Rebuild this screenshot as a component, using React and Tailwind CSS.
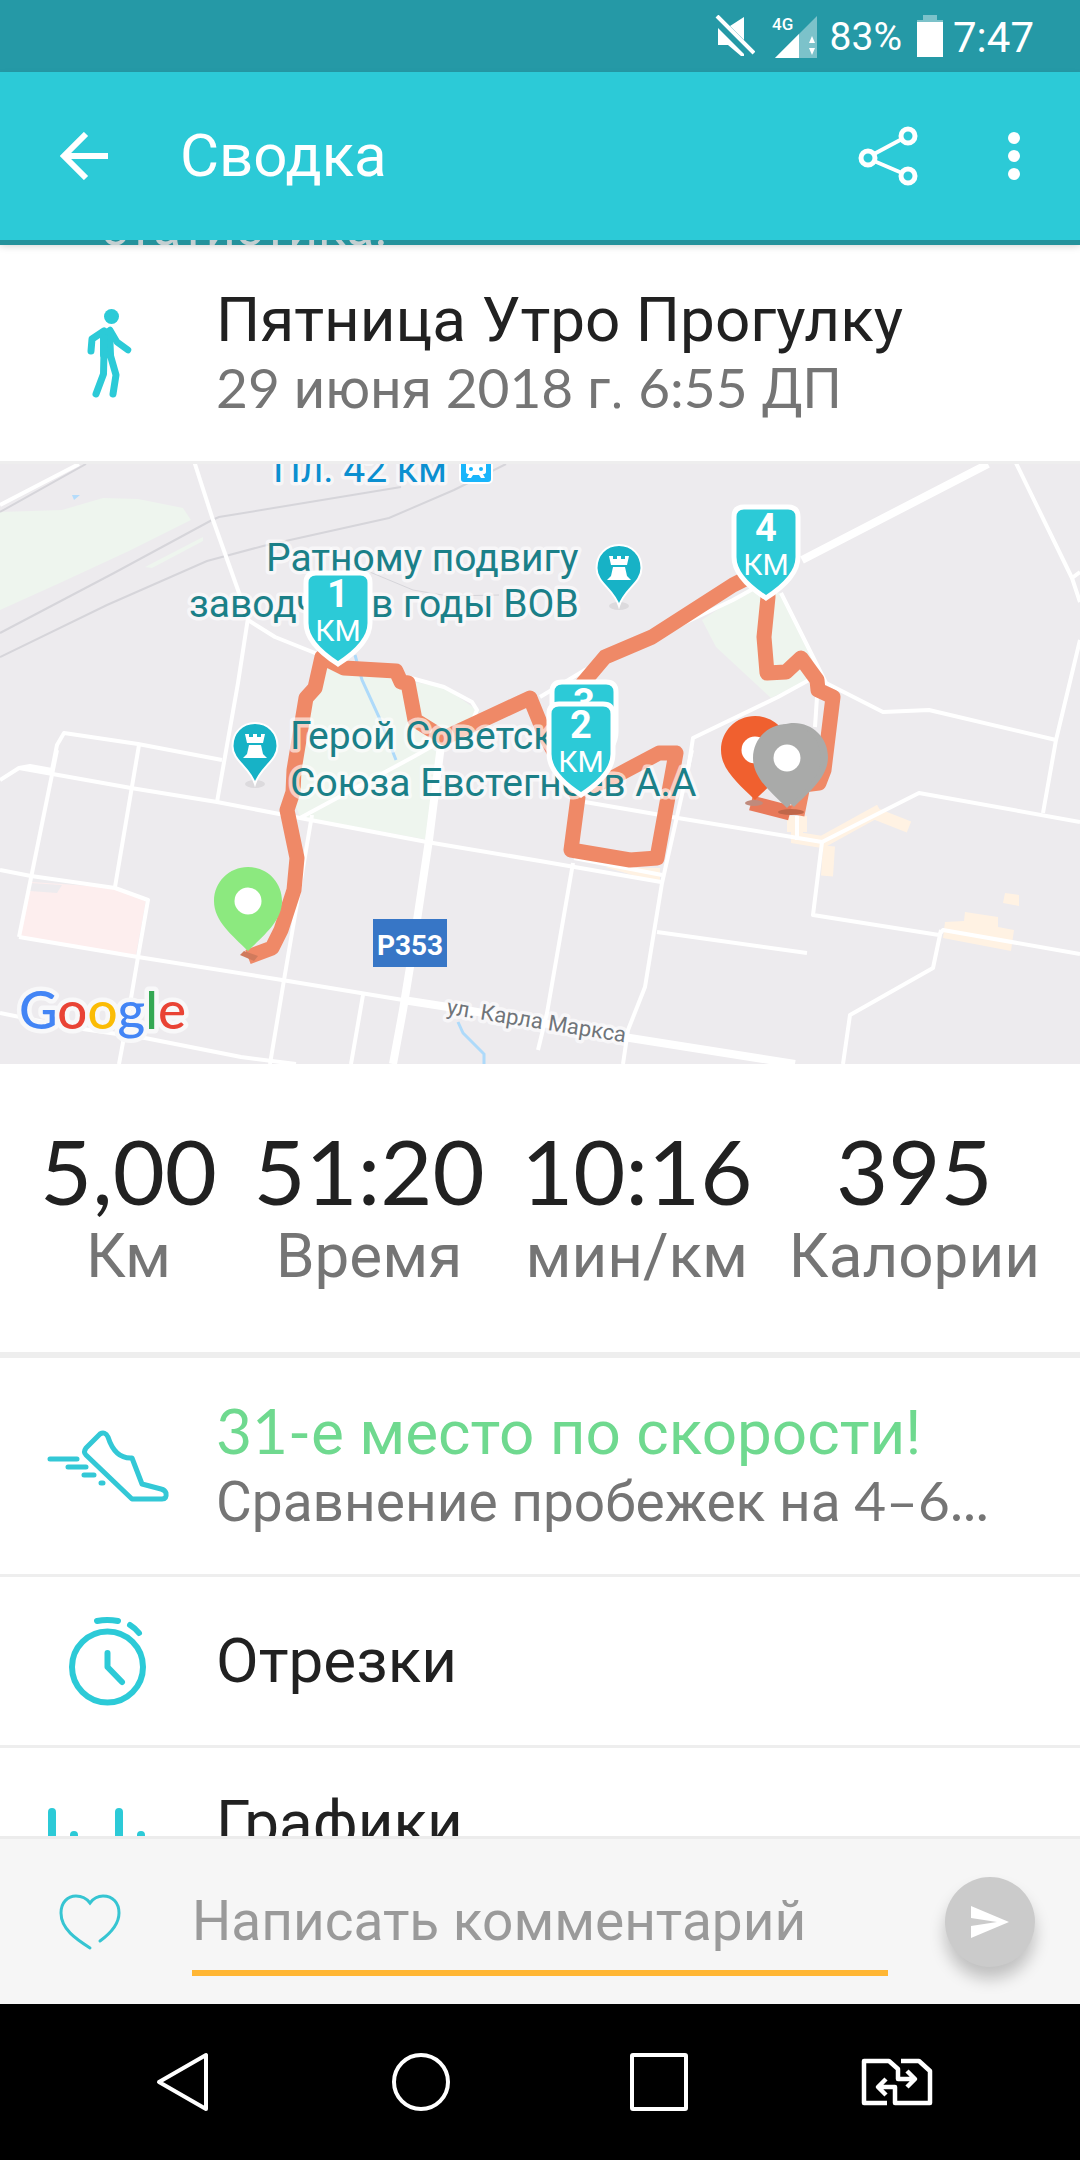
import React from "react";

const Num = ({ children }) => (
  <span className="font-['Lato',sans-serif] leading-none">{children}</span>
);

function StatusBar() {
  return (
    <div className="flex h-[72px] shrink-0 items-center justify-end bg-[#2599a6] pr-[46px] text-white">
      <svg className="mr-[16px] h-[42px] w-[40px]" viewBox="0 0 40 42" fill="#fff">
        <path d="M15 11 29 2V25Z" />
        <path d="M3 13 29 39V41H26L13 30H3Z" />
        <path d="M2 1 39 38" stroke="#fff" strokeWidth="4" />
      </svg>
      <svg className="mr-[13px] h-[48px] w-[46px]" viewBox="0 0 46 48">
        <path d="M4 46 46 4V46Z" fill="#7cc2ca" />
        <path d="M4 46 28 22V46Z" fill="#fff" />
        <path d="M38 31 41 24 44 31ZM38 36 41 43 44 36Z" fill="#fff" />
        <text x="1" y="18" fontSize="17" fill="#fff" fontFamily="Roboto, sans-serif" fontWeight="500">4G</text>
      </svg>
      <span className="pt-[3px] text-[39px]">83%</span>
      <svg className="mr-[10px] ml-[15px] h-[42px] w-[26px]" viewBox="0 0 26 42">
        <path d="M6 0H20V5H26V8H0V5H6Z" fill="#7cc2ca" />
        <path d="M0 7H26V42H0Z" fill="#fff" />
      </svg>
      <span className="pt-[3px] text-[42px]">7:47</span>
    </div>
  );
}

function AppBar() {
  return (
    <header className="relative z-10 shrink-0 shadow-[0_5px_8px_rgba(0,0,0,0.22)]">
      <div className="flex h-[168px] items-center bg-[#2ccad7] text-white">
        <button aria-label="Назад" className="ml-[60px] h-[48px] w-[48px]">
          <svg viewBox="0 0 48 48" fill="none" stroke="#fff" strokeWidth="6">
            <path d="M26 2 4 24 26 46M4 24H48" />
          </svg>
        </button>
        <h1 className="ml-[72px] flex-1 text-[60px]">Сводка</h1>
        <button aria-label="Поделиться" className="mr-[88px] h-[62px] w-[62px]">
          <svg viewBox="0 0 62 62" fill="none" stroke="#fff" strokeWidth="5">
            <circle cx="51" cy="11" r="7" />
            <circle cx="11" cy="33" r="7" />
            <circle cx="51" cy="51" r="7" />
            <path d="M17 29 45 14M17 36 45 48" strokeWidth="4" />
          </svg>
        </button>
        <button aria-label="Ещё" className="mr-[59px] h-[52px] w-[14px]">
          <svg viewBox="0 0 14 52" fill="#fff">
            <circle cx="7" cy="8" r="6" />
            <circle cx="7" cy="26" r="6" />
            <circle cx="7" cy="44" r="6" />
          </svg>
        </button>
      </div>
    </header>
  );
}

const Walker = () => (
  <svg className="h-[100px] w-[60px]" viewBox="78 303 60 100" fill="none" stroke="#2ccad7" strokeWidth="8" strokeLinecap="round" strokeLinejoin="round">
    <circle cx="111.500" cy="316.500" r="7.500" fill="#2ccad7" stroke="none" />
    <path d="M104 331 92 339 91 351M104 352 103.500 374 96 394M110 354 116 375 113 394" strokeWidth="7" />
    <path d="M110 330 117 342 128 350" strokeWidth="6.500" />
    <path d="M103 332 110 331 111 355 103 355Z" fill="#2ccad7" strokeWidth="6" />
  </svg>
);

const Shoe = () => (
  <svg className="h-[80px] w-[124px]" viewBox="46 1426 124 80" fill="none" stroke="#33c8d6" strokeWidth="5" strokeLinecap="round" strokeLinejoin="round">
    <path d="M100 1434 86 1448Q83 1452 86 1455L132 1499H162Q167 1499 166 1493Q165 1490 161 1489L142 1484 132 1458Q115 1459 108 1437Q105 1431 100 1434Z" />
    <path d="M50 1459H77M68 1467H86M84 1475H94M101 1483H103" />
  </svg>
);

const Stopwatch = () => (
  <svg className="h-[96px] w-[84px]" viewBox="66 1613 84 96" fill="none" stroke="#2ccad7" strokeWidth="6" strokeLinecap="round" strokeLinejoin="round">
    <circle cx="107.500" cy="1667" r="35.500" />
    <path d="M97 1621Q107 1619 118 1621M130 1625Q135 1628 139 1633M107.500 1653V1667L122 1682" />
  </svg>
);

const Bars = () => (
  <svg className="h-[96px] w-[120px]" viewBox="48 1808 120 96" fill="none" stroke="#2ccad7" strokeWidth="8" strokeLinecap="round">
    <path d="M52 1812V1896M74 1835V1896M119 1812V1896M141 1835V1896" />
  </svg>
);

function Row({ icon, children, tall }) {
  return (
    <div className={(tall ? "h-[216px]" : "h-[168px]") + " flex shrink-0 items-center"}>
      <div className="flex w-[216px] shrink-0 justify-center">{icon}</div>
      <div className="min-w-0 flex-1 pr-[64px]">{children}</div>
    </div>
  );
}

function Shield({ x, y, n }) {
  return (
    <g transform={`translate(${x} ${y})`}>
      <path
        d="M-22 2H22Q32 2 32 12V52C32 70 14 84 0 93C-14 84 -32 70 -32 52V12Q-32 2 -22 2Z"
        fill="#2ccad7"
        stroke="#fff"
        strokeWidth="5"
      />
      <text y="36" textAnchor="middle" fontSize="38" fontWeight="700" fill="#fff">{n}</text>
      <text y="70" textAnchor="middle" fontSize="30" fill="#fff">КМ</text>
    </g>
  );
}

function Pin({ x, y, color }) {
  return (
    <g transform={`translate(${x} ${y})`}>
      <path d="M0 0C19 0 34 15 34 34C34 54 16 68 0 84C-16 68 -34 54 -34 34C-34 15 -19 0 0 0Z" fill={color} />
      <circle cy="34" r="13.500" fill="#fff" />
    </g>
  );
}

function Poi({ x, y }) {
  return (
    <g transform={`translate(${x} ${y})`}>
      <ellipse cy="61" rx="10" ry="4" fill="#dcdadd" />
      <path d="M0 0C13 0 22.500 10 22.500 23C22.500 38 5 44 0 61C-5 44 -22.500 38 -22.500 23C-22.500 10 -13 0 0 0Z" fill="#17b2c6" stroke="#fff" strokeWidth="2" />
      <path d="M-10 11H-6V14H-2V11H2V14H6V11H10L8 20H-8ZM-6 22H6L8 31 12 35H-12L-8 31Z" fill="#fff" />
    </g>
  );
}

const roads = [
  "M0 505 79 464",
  "M194 461 213 520 248 618 238 683 217 802",
  "M248 620 275 637 320 655M411 678 444 687 472 702 477 710 470 726",
  "M52 770 57 745 64 733 138 744 222 760",
  "M139 745 115 887M57 750 19 937",
  "M52 770 30 766 19 768 0 780M19 768 131 788 217 802 300 818 427 842 540 861 661 882",
  "M300 818 413 757 452 735",
  "M574 858 662 875M573 863 547 1013 538 1050",
  "M0 870 31 876 115 888 148 900 138 957 129 1010 119 1064",
  "M19 937 138 957 282 980 403 1000",
  "M0 1013 69 1027 145 1038 241 1057 296 1064",
  "M312 815 284 980 270 1064M363 995 351 1064",
  "M692 750 662 883 645 987 628 1030 623 1064",
  "M688 770 693 738 778 697 809 680",
  "M585 802 678 818 822 842 919 793 1080 822",
  "M657 932 807 953",
  "M822 842 813 915 939 935 943 930 1080 954M941 930 933 968 850 1015 843 1064",
  "M1080 640 1056 740 1043 813",
  "M1015 461 1072 578 1080 602M1072 578 1080 572",
  "M781 593 826 683 883 712 929 710 1056 740",
  "M540 697 585 670 733 600 760 585",
  "M817 697 815 727M797 816V840",
];

function RouteMap() {
  const label = { fill: "#1b8088", stroke: "#ffffff", strokeOpacity: 0.6, strokeWidth: 7, strokeLinejoin: "round", paintOrder: "stroke" };
  return (
    <svg className="block w-full shrink-0" viewBox="0 464 1080 600" fontFamily="Roboto, sans-serif" role="img" aria-label="Карта маршрута">
      <rect y="464" width="1080" height="600" fill="#edebee" />
      <g fill="#eef5ee">
        <path d="M0 512 62 510 103 498 138 499 183 508 191 520 131 550 62 582 0 610Z" />
        <path d="M145 567 203 537 203 541 152 568Z" />
        <path d="M327 668 444 687 477 710 470 724 440 738 437 780 429 840 300 817 290 790 300 720Z" />
        <path d="M750 588 781 593 822 673 771 698 716 647 702 620Z" />
      </g>
      <path d="M31 882 62 884 115 888 146 900 136 955 20 937Z" fill="#fdeeee" />
      <path d="M30 883 62 885 57 893 30 891Z" fill="#edebee" />
      <path d="M72 495H80L74 500Z" fill="#b5dcfb" />
      <g fill="none" stroke="#fff2e3">
        <path d="M797 816V838L822 842 880 810M876 814 909 827M829 846 827 876" strokeWidth="12" />
        <path d="M797 816V832" strokeWidth="20" />
      </g>
      <path d="M945 922 964 921 965 912 998 917 998 927 1014 930 1011 951 943 938ZM1005 893 1019 895 1019 906 1003 903ZM605 867 660 868 660 883Z" fill="#fff2e3" />
      <g fill="none" stroke="#d6d5da" strokeWidth="2">
        <path d="M0 512 86 464M0 633 114 573 212 520 219 517 310 502 401 487" />
        <path d="M0 657 107 605 207 561 263 546 389 518 454 490 506 464" />
        <path d="M340 560 365 570 413 590 448 596 499 595" strokeWidth="1" />
      </g>
      <g fill="none" stroke="#fff" strokeWidth="4" strokeLinejoin="round">
        {roads.map((d) => <path key={d} d={d} />)}
        <path d="M452 735 441 745 429 840 410 967 403 1010 393 1064M802 560 988 464M403 1000 448 1007 630 1038 795 1064" strokeWidth="8" />
      </g>
      <path d="M355 655 362 680 379 717 396 760M458 1022 463 1033 484 1054V1064" fill="none" stroke="#aedafa" strokeWidth="3" />
      <g fill="none" stroke="#ef8967" strokeWidth="15" strokeLinejoin="round">
        <path d="M248 957 272 948 281 930 294 890 297 858 287 810 293 792 294 770 306 698 315 688 322 657 344 668 396 671 401 682 408 683 415 720 444 738 530 698 545 735 578 797 571 850 630 860 657 858 676 753 659 753 614 777 590 787 560 730 583 683 605 657 652 637 733 585 767 568 768 597 764 637 767 673 786 672 801 658 817 680 818 690 833 697 824 770 819 783 803 785 797 815" />
        <path d="M790 813 751 803" stroke="#e8795a" />
      </g>
      <path d="M244 951 258 956 254 961 240 955Z" fill="#d07a5c" />
      <ellipse cx="754" cy="803" rx="9" ry="3" fill="#c08a7c" />
      <ellipse cx="791" cy="812" rx="13" ry="3" fill="#c0674a" />
      <g fontSize="39" {...label}>
        <text x="266" y="571">Ратному подвигу</text>
        <text x="189" y="617">заводчан в годы ВОВ</text>
        <text x="290" y="749">Герой Советского</text>
        <text x="290" y="796">Союза Евстегнеев А.А</text>
        <text x="273" y="482" fill="#0b8fd0">Пл. 42 км</text>
      </g>
      <rect x="460" y="450" width="32" height="33" rx="4" fill="#19b5fb" stroke="#fff" strokeWidth="2" />
      <path d="M466 460H486V472Q486 474 483 474L485 478H481L479 475H473L471 478H467L469 474Q466 474 466 472Z" fill="#fff" />
      <circle cx="471" cy="469" r="2" fill="#19b5fb" />
      <circle cx="481" cy="469" r="2" fill="#19b5fb" />
      <Poi x={619} y={545} />
      <Poi x={255} y={723} />
      <rect x="373" y="919" width="74" height="48" fill="#3776c6" />
      <text x="410" y="955" textAnchor="middle" fontSize="28" fontWeight="700" fill="#fff">Р353</text>
      <text transform="translate(446 1014) rotate(9)" fontSize="22" {...label} fill="#70757a">ул. Карла Маркса</text>
      <Shield x={338} y={571} n="1" />
      <Shield x={766} y={505} n="4" />
      <Shield x={584} y={680} n="3" />
      <Shield x={581} y={702} n="2" />
      <Pin x={248} y={867} color="#8ce97f" />
      <Pin x={755} y={716} color="#f0602f" />
      <Pin x={794} y={723} color="#a9aaa9" />
      <Pin x={787} y={724} color="#a9aaa9" />
      <text x="19" y="1029" fontSize="53" fontWeight="500" fontFamily="Lato, sans-serif" stroke="#f8f8f9" strokeWidth="9" strokeLinejoin="round" paintOrder="stroke">
        <tspan fill="#4385f5">G</tspan>
        <tspan fill="#e94335">o</tspan>
        <tspan fill="#fbbc05">o</tspan>
        <tspan fill="#4385f5">g</tspan>
        <tspan fill="#34a853">l</tspan>
        <tspan fill="#e94335">e</tspan>
      </text>
    </svg>
  );
}

const stats = [
  ["5,00", "Км"],
  ["51:20", "Время"],
  ["10:16", "мин/км"],
  ["395", "Калории"],
];

function CommentBar() {
  return (
    <form className="flex h-[168px] shrink-0 items-center border-t-[3px] border-[#ececec] bg-[#f6f6f6]" onSubmit={(e) => e.preventDefault()}>
      <button type="button" aria-label="Нравится" className="ml-[59px] h-[58px] w-[62px]">
        <svg viewBox="0 0 62 58" fill="none" stroke="#36c5d2" strokeWidth="3" strokeLinecap="round">
          <path d="M31 55C17 46 2 36 2 20C2 9 9 3 17 3C24 3 28 6 31 10C34 6 38 3 44 3C54 3 60 10 60 20C60 31 52 40 41 48" />
        </svg>
      </button>
      <input
        type="text"
        aria-label="Написать комментарий"
        placeholder="Написать комментарий"
        className="ml-[71px] h-[108px] min-w-0 flex-1 border-b-[6px] border-[#ffb634] bg-transparent pt-[4px] text-[55px] text-[#212121] outline-none placeholder:text-[#9a9a9a]"
      />
      <button aria-label="Отправить" className="mr-[45px] ml-[57px] flex size-[90px] items-center justify-center rounded-full bg-[#cbcbcb] shadow-[0_12px_16px_rgba(0,0,0,0.22)]">
        <svg className="h-[32px] w-[38px]" viewBox="0 0 38 32" fill="#fff">
          <path d="M0 0 38 16 0 32V20L26 16 0 12Z" />
        </svg>
      </button>
    </form>
  );
}

function NavBar() {
  const button = "flex flex-1 items-center justify-center";
  return (
    <nav className="flex h-[156px] shrink-0 bg-black px-[64px]">
      <button aria-label="Назад (система)" className={button}>
        <svg className="size-[62px]" viewBox="0 0 62 62" fill="none" stroke="#fff" strokeWidth="4" strokeLinejoin="round">
          <path d="M54 4V58L7 31Z" />
        </svg>
      </button>
      <button aria-label="Домой" className={button}>
        <svg className="size-[62px]" viewBox="0 0 62 62" fill="none" stroke="#fff" strokeWidth="4">
          <circle cx="31" cy="31" r="27" />
        </svg>
      </button>
      <button aria-label="Недавние" className={button}>
        <svg className="size-[62px]" viewBox="0 0 62 62" fill="none" stroke="#fff" strokeWidth="4">
          <rect x="4" y="4" width="54" height="54" rx="1" />
        </svg>
      </button>
      <button aria-label="Сменить SIM" className={button}>
        <svg className="h-[50px] w-[74px]" viewBox="0 0 74 50" fill="none" stroke="#fff" strokeWidth="4.500" strokeLinejoin="round">
          <path d="M27 46H4V4H29L38 12V22H54M47 14 55 22 47 30" />
          <path d="M41 4H59L70 14V46H35V30H19M26 22 18 30 26 38" />
        </svg>
      </button>
    </nav>
  );
}

export default function App() {
  return (
    <div className="flex h-screen flex-col overflow-hidden bg-white font-['Roboto',sans-serif] text-[#212121]">
      <StatusBar />
      <AppBar />
      <main className="flex min-h-0 flex-1 flex-col overflow-hidden">
        <div className="relative z-20 flex h-[5px] shrink-0 items-end overflow-hidden bg-[#24929c] pl-[101px] text-[52px] leading-[34px] text-[#c3cfd1]">
          <span>статистика.</span>
        </div>
        <Row tall icon={<Walker />}>
          <h2 className="text-[62px] leading-[72px]">Пятница Утро Прогулку</h2>
          <p className="text-[55px] leading-[66px] text-[#757575]">
            <Num>29</Num> июня <Num>2018</Num> г. <Num>6:55</Num> ДП
          </p>
        </Row>
        <div className="h-[3px] shrink-0 bg-[#eee]" />
        <RouteMap />
        <section className="flex shrink-0 justify-between border-b-[6px] border-[#eee] px-[40px] py-[58px]">
          {stats.map(([value, unit]) => (
            <div key={unit} className="text-center">
              <div className="font-['Lato',sans-serif] text-[90px] leading-[96px]">{value}</div>
              <div className="text-[62px] leading-[76px] text-[#757575]">{unit}</div>
            </div>
          ))}
        </section>
        <Row tall icon={<Shoe />}>
          <h2 className="text-[62px] leading-[72px] text-[#6fd98f]"><Num>31-</Num>е место по скорости!</h2>
          <p className="truncate text-[55px] leading-[66px] text-[#757575]">Сравнение пробежек на <Num>4–6...</Num></p>
        </Row>
        <div className="h-[3px] shrink-0 bg-[#eee]" />
        <Row icon={<Stopwatch />}>
          <h2 className="text-[62px] leading-[72px]">Отрезки</h2>
        </Row>
        <div className="h-[3px] shrink-0 bg-[#eee]" />
        <Row tall icon={<Bars />}>
          <h2 className="mb-[66px] text-[62px] leading-[72px]">Графики</h2>
        </Row>
      </main>
      <CommentBar />
      <NavBar />
    </div>
  );
}
